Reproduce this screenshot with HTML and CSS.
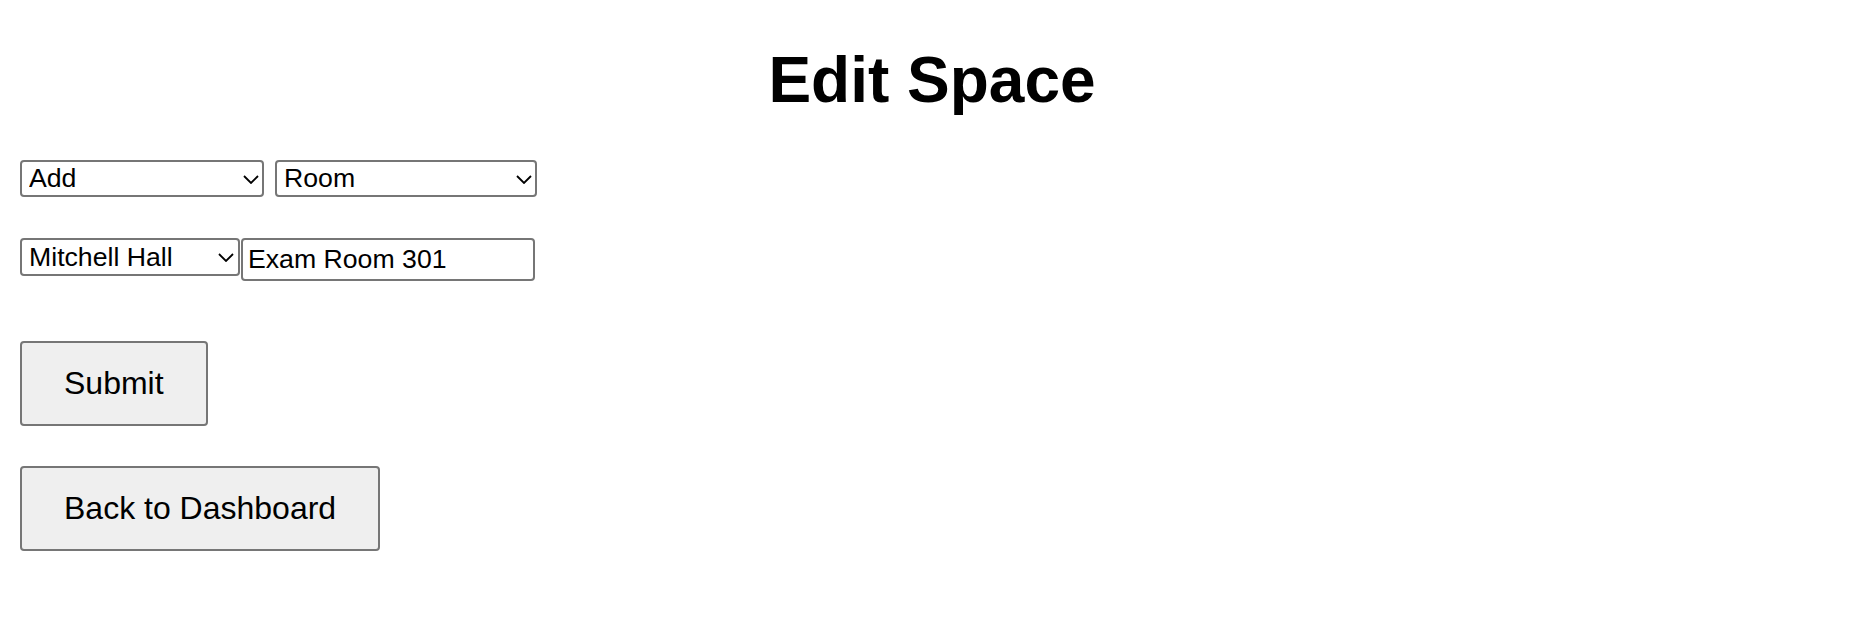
FILE: index.html
```html
<!DOCTYPE html>
<html lang="en">
<head>
<meta charset="utf-8">
<title>Edit Space</title>
<link rel="stylesheet" href="styles.css">
</head>
<body>
<h1 class="title">Edit Space</h1>
<form class="form">
  <div class="row row-top">
    <span class="sel sel-action">
      <select class="select"><option>Add</option><option>Edit</option><option>Delete</option></select>
      <svg class="chev" viewBox="0 0 16 9" width="16" height="9"><path d="M1 1 L8 8 L15 1" fill="none" stroke="#000" stroke-width="1.8"/></svg>
    </span>
    <span class="sel sel-type">
      <select class="select"><option>Room</option><option>Building</option></select>
      <svg class="chev" viewBox="0 0 16 9" width="16" height="9"><path d="M1 1 L8 8 L15 1" fill="none" stroke="#000" stroke-width="1.8"/></svg>
    </span>
  </div>
  <div class="row row-mid">
    <span class="sel sel-building">
      <select class="select"><option>Mitchell Hall</option></select>
      <svg class="chev" viewBox="0 0 16 9" width="16" height="9"><path d="M1 1 L8 8 L15 1" fill="none" stroke="#000" stroke-width="1.8"/></svg>
    </span>
    <input class="text-input" type="text" value="Exam Room 301">
  </div>
  <button class="btn btn-submit" type="button">Submit</button>
  <button class="btn" type="button">Back to Dashboard</button>
</form>
</body>
</html>
```
FILE: styles.css
```css
html, body {
  margin: 0;
  padding: 0;
  background: #fff;
}
body {
  padding: 0 20px;
  font-family: "Liberation Sans", Arial, sans-serif;
  color: #000;
}
.title {
  font-size: 64px;
  font-weight: bold;
  text-align: center;
  margin: 43px 0;
  line-height: normal;
}
.form {
  display: flex;
  flex-direction: column;
  align-items: flex-start;
}
.row {
  display: flex;
  align-items: flex-start;
}
.row-top {
  gap: 11px;
  margin-bottom: 41px;
}
.row-mid {
  gap: 1px;
  margin-bottom: 60px;
}
.sel {
  position: relative;
  display: block;
}
.select {
  appearance: none;
  -webkit-appearance: none;
  box-sizing: border-box;
  height: 37px;
  font-family: "Liberation Sans", Arial, sans-serif;
  font-size: 26.67px;
  color: #000;
  background: #fff;
  border: 2px solid #767676;
  border-radius: 4px;
  padding: 0 36px 0 7px;
  margin: 0;
  line-height: 31px;
  display: block;
}
.sel-action .select { width: 244px; }
.sel-type .select { width: 262px; }
.sel-building .select { width: 220px; height: 38px; }
.chev {
  position: absolute;
  right: 5px;
  top: 50%;
  margin-top: -4px;
  pointer-events: none;
}
.sel-building .chev {
  right: 6px;
}
.text-input {
  box-sizing: border-box;
  width: 294px;
  height: 43px;
  font-family: "Liberation Sans", Arial, sans-serif;
  font-size: 26.67px;
  color: #000;
  background: #fff;
  border: 2px solid #767676;
  border-radius: 4px;
  padding: 0 5px;
  margin: 0;
}
.btn {
  box-sizing: border-box;
  font-family: "Liberation Sans", Arial, sans-serif;
  font-size: 32px;
  line-height: normal;
  color: #000;
  background: #efefef;
  border: 2px solid #767676;
  border-radius: 4px;
  padding: 22px 42px;
  margin: 0;
  height: 85px;
}
.btn-submit {
  margin-bottom: 40px;
}
```
